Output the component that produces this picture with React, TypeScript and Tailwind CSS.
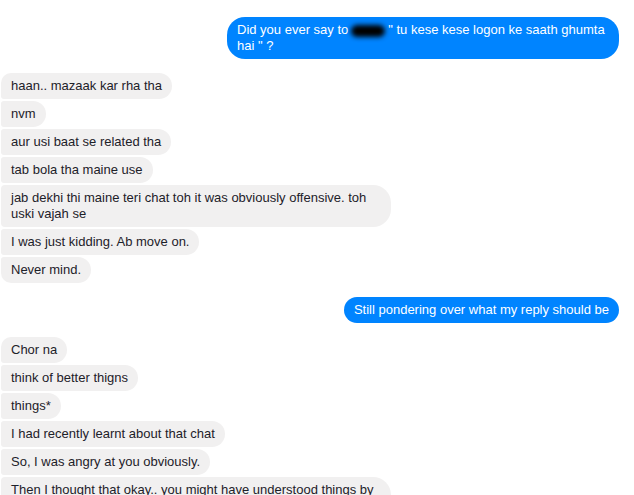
type Msg = { text: React.ReactNode };

const font = { fontFamily: '"Liberation Sans", Arial, sans-serif' };

function Blur() {
  return (
    <span className="mx-[3px] inline-block h-[12px] w-[34px] rounded-full bg-black align-middle blur-[2.5px]" />
  );
}

function Theirs({ items }: { items: Msg[] }) {
  return (
    <div className="flex flex-col items-start gap-[2px]">
      {items.map((m, i) => {
        const first = i === 0;
        const last = i === items.length - 1;
        return (
          <div
            key={i}
            className={`max-w-[390px] rounded-r-[18px] bg-[#f1f0f0] px-[10px] py-[5px] text-[13px] leading-[16px] text-[#1d2129] ${
              first ? "rounded-tl-[14px]" : "rounded-tl-[4px]"
            } ${last ? "rounded-bl-[14px]" : "rounded-bl-[4px]"}`}
          >
            {m.text}
          </div>
        );
      })}
    </div>
  );
}

function Mine({ children }: { children: React.ReactNode }) {
  return (
    <div className="flex justify-end">
      <div className="max-w-[392px] rounded-[18px] bg-[#0084ff] px-[10px] py-[5px] text-[13px] leading-[16px] text-white">
        {children}
      </div>
    </div>
  );
}

export default function App() {
  return (
    <div className="h-[495px] w-[634px] overflow-hidden bg-white" style={font}>
      <div className="flex flex-col gap-[14px] pl-[1px] pr-[15px] pt-[17px]">
        <Mine>
          Did you ever say to<Blur />" tu kese kese logon ke saath ghumta hai " ?
        </Mine>
        <Theirs
          items={[
            { text: "haan.. mazaak kar rha tha" },
            { text: "nvm" },
            { text: "aur usi baat se related tha" },
            { text: "tab bola tha maine use" },
            { text: "jab dekhi thi maine teri chat toh it was obviously offensive. toh uski vajah se" },
            { text: "I was just kidding. Ab move on." },
            { text: "Never mind." },
          ]}
        />
        <Mine>Still pondering over what my reply should be</Mine>
        <Theirs
          items={[
            { text: "Chor na" },
            { text: "think of better thigns" },
            { text: "things*" },
            { text: "I had recently learnt about that chat" },
            { text: "So, I was angry at you obviously." },
            { text: "Then I thought that okay.. you might have understood things by now" },
          ]}
        />
      </div>
    </div>
  );
}
